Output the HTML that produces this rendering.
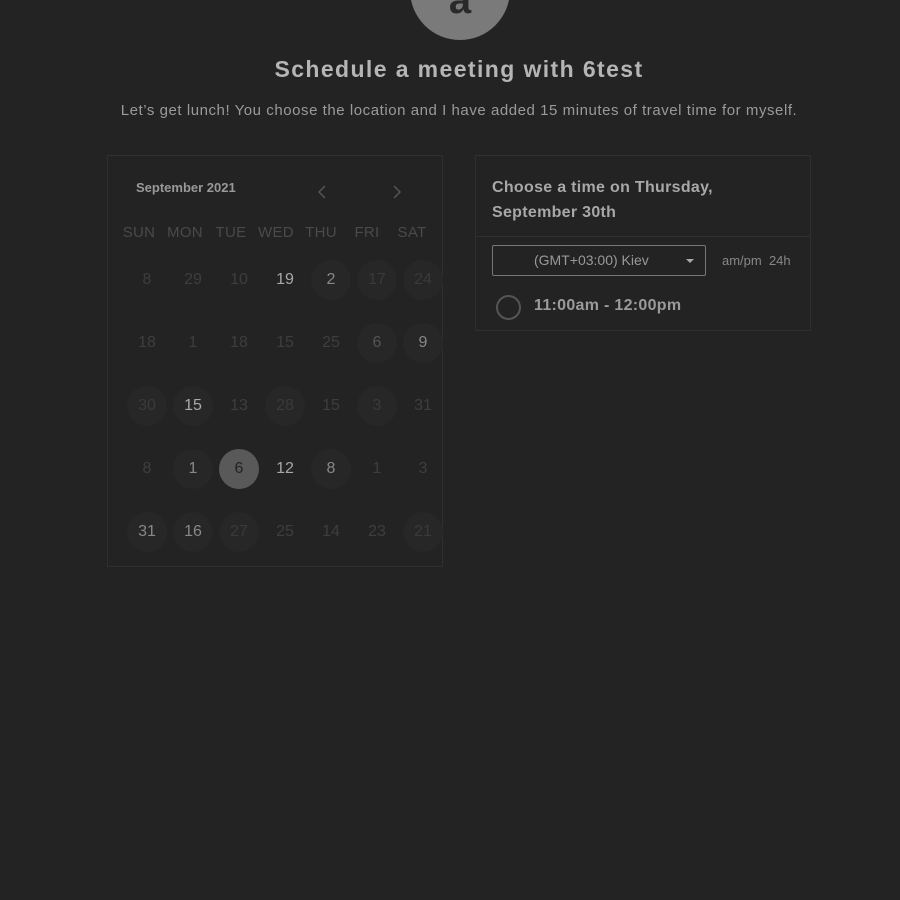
<!DOCTYPE html>
<html><head><style>
body{margin:0;width:900px;height:900px;background:#232323;font-family:"Liberation Sans",sans-serif;position:relative;overflow:hidden}
.av{position:absolute;left:410px;top:-60px;width:100px;height:100px;border-radius:50%;background:#7a7a7a;color:#2a2a2a;font-size:40px;font-weight:bold;text-align:center;line-height:120px;overflow:hidden}
h1{position:absolute;top:56px;left:0;width:918px;text-align:center;margin:0;font-size:23px;color:#b5b5b5;font-weight:bold;letter-spacing:1.4px}
.sub{position:absolute;top:102px;left:0;width:918px;text-align:center;font-size:15px;color:#9a9a9a;letter-spacing:0.55px}
.cal{position:absolute;left:107px;top:155px;width:336px;height:412px;border:1px solid #2f2f2f;box-sizing:border-box}
.mon{position:absolute;left:136px;top:180px;font-size:13px;font-weight:bold;color:#999}
.arr{position:absolute;top:184px}
.wd{position:absolute;top:224px;width:46px;margin-left:-23px;text-align:center;font-size:15px;color:#4a4a4a;letter-spacing:0.3px}
.d{position:absolute;width:40px;height:40px;margin:-20px 0 0 -20px;border-radius:50%;text-align:center;line-height:40px;font-size:16px;color:#3e3e3e}
.b{color:#a8a8a8}
.c{background:#272727;color:#3a3a3a}
.l{background:#272727;color:#888}
.s{background:#595959;color:#222}
.tp{position:absolute;left:475px;top:155px;width:336px;height:176px;border:1px solid #2f2f2f;box-sizing:border-box}
.tp .hd{height:81px;border-bottom:1px solid #2f2f2f;padding:19px 0 0 16px;box-sizing:border-box;font-size:16px;font-weight:bold;color:#a8a8a8;line-height:25px;letter-spacing:0.3px}
.sel{position:absolute;left:492px;top:245px;width:214px;height:31px;border:1px solid #777;border-radius:2px;box-sizing:border-box;color:#999;font-size:14px;line-height:29px;padding-left:41px}
.sel:after{content:"";position:absolute;right:11px;top:13px;border:4px solid transparent;border-top:4px solid #aaa}
.fm{position:absolute;left:722px;top:253px;font-size:13px;color:#888}
.rad{position:absolute;left:496px;top:295px;width:25px;height:25px;border:2px solid #555;border-radius:50%;box-sizing:border-box}
.tm{position:absolute;left:534px;top:297px;font-size:16px;font-weight:bold;color:#9a9a9a;letter-spacing:0.3px}
</style></head><body>
<div class="av">a</div>
<h1>Schedule a meeting with 6test</h1>
<div class="sub">Let’s get lunch! You choose the location and I have added 15 minutes of travel time for myself.</div>
<div class="cal"></div>
<div class="mon">September 2021</div>
<svg class="arr" style="left:316px" width="12" height="16" viewBox="0 0 12 16"><path d="M9 2L3 8l6 6" fill="none" stroke="#555" stroke-width="1.5"/></svg>
<svg class="arr" style="left:391px" width="12" height="16" viewBox="0 0 12 16"><path d="M3 2l6 6-6 6" fill="none" stroke="#555" stroke-width="1.5"/></svg>
<div class="wd" style="left:139px">SUN</div><div class="wd" style="left:185px">MON</div><div class="wd" style="left:231px">TUE</div><div class="wd" style="left:276px">WED</div><div class="wd" style="left:321px">THU</div><div class="wd" style="left:367px">FRI</div><div class="wd" style="left:412px">SAT</div>
<div class="d" style="left:147px;top:280px">8</div><div class="d" style="left:193px;top:280px">29</div><div class="d" style="left:239px;top:280px">10</div><div class="d b" style="left:285px;top:280px">19</div><div class="d l" style="left:331px;top:280px">2</div><div class="d c" style="left:377px;top:280px">17</div><div class="d c" style="left:423px;top:280px">24</div>
<div class="d" style="left:147px;top:343px">18</div><div class="d" style="left:193px;top:343px">1</div><div class="d" style="left:239px;top:343px">18</div><div class="d" style="left:285px;top:343px">15</div><div class="d" style="left:331px;top:343px">25</div><div class="d c" style="left:377px;top:343px;color:#555">6</div><div class="d l" style="left:423px;top:343px">9</div>
<div class="d c" style="left:147px;top:406px">30</div><div class="d l" style="left:193px;top:406px;color:#aaa">15</div><div class="d" style="left:239px;top:406px">13</div><div class="d c" style="left:285px;top:406px">28</div><div class="d" style="left:331px;top:406px">15</div><div class="d c" style="left:377px;top:406px">3</div><div class="d" style="left:423px;top:406px">31</div>
<div class="d" style="left:147px;top:469px">8</div><div class="d l" style="left:193px;top:469px">1</div><div class="d s" style="left:239px;top:469px">6</div><div class="d b" style="left:285px;top:469px">12</div><div class="d l" style="left:331px;top:469px">8</div><div class="d" style="left:377px;top:469px">1</div><div class="d" style="left:423px;top:469px">3</div>
<div class="d l" style="left:147px;top:532px">31</div><div class="d l" style="left:193px;top:532px">16</div><div class="d c" style="left:239px;top:532px">27</div><div class="d" style="left:285px;top:532px">25</div><div class="d" style="left:331px;top:532px">14</div><div class="d" style="left:377px;top:532px">23</div><div class="d c" style="left:423px;top:532px">21</div>
<div class="tp"><div class="hd">Choose a time on Thursday,<br>September 30th</div></div>
<div class="sel">(GMT+03:00) Kiev</div>
<div class="fm">am/pm&nbsp; 24h</div>
<div class="rad"></div>
<div class="tm">11:00am - 12:00pm</div>
</body></html>
